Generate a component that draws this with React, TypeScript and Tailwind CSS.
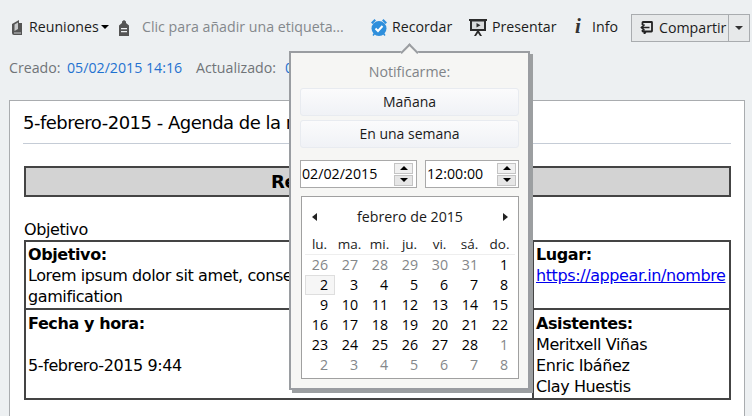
import React from 'react';

const ui = "font-['Open_Sans','Noto_Sans',sans-serif]";

const Spinner = () => (
  <div className="flex h-[23px] w-[19px] flex-col gap-px">
    <div className="flex h-[11px] items-center justify-center border border-[#c4c4c4] bg-[#f0f0f0]">
      <div className="h-0 w-0 border-x-[4px] border-b-[4px] border-x-transparent border-b-black" />
    </div>
    <div className="flex h-[11px] items-center justify-center border border-[#c4c4c4] bg-[#e6e6e6]">
      <div className="h-0 w-0 border-x-[4px] border-t-[4px] border-x-transparent border-t-black" />
    </div>
  </div>
);

const weekDays = ['lu.', 'ma.', 'mi.', 'ju.', 'vi.', 'sá.', 'do.'];
const days: [number, boolean][] = [
  [26, true], [27, true], [28, true], [29, true], [30, true], [31, true], [1, false],
  ...Array.from({ length: 27 }, (_, i): [number, boolean] => [i + 2, false]),
  [1, true], [2, true], [3, true], [4, true], [5, true], [6, true], [7, true], [8, true],
];

const Popover = () => (
  <div className={`${ui} absolute left-[289px] top-[51px] h-[339px] w-[241px] border-2 border-[#9a9da1] bg-[#f6f6f4] px-[9px] shadow-[3px_3px_0_#9c9fa1]`}>
    <div className="absolute -top-[7px] left-[112px] h-[13px] w-[13px] rotate-45 border-l-2 border-t-2 border-[#9a9da1] bg-[#f6f6f4]" />
    <div className="relative mt-[9px] h-[20px] text-center text-[14.2px] leading-[20px] text-[#808488]">Notificarme:</div>
    <button className="mt-[6px] block h-[28px] w-[219px] rounded-[3px] border border-[#e8ebf0] bg-gradient-to-b from-[#fbfbfc] to-[#f0f2f6] pb-[2px] text-[14px] text-[#1a1a1a]">Mañana</button>
    <button className="mt-[4px] block h-[28px] w-[219px] rounded-[3px] border border-[#e8ebf0] bg-gradient-to-b from-[#fbfbfc] to-[#f0f2f6] pb-[2px] text-[14px] text-[#1a1a1a]">En una semana</button>
    <div className="mt-[12px] flex w-[219px] justify-between">
      <div className="flex h-[28px] w-[117px] items-center justify-between border border-[#a9a9a9] bg-white pl-[1px] pr-[3px] text-[14.2px] text-black">
        <span>02/02/2015</span><Spinner />
      </div>
      <div className="flex h-[28px] w-[94px] items-center justify-between border border-[#a9a9a9] bg-white pl-[1px] pr-[2px] text-[14.2px] text-black">
        <span>12:00:00</span><Spinner />
      </div>
    </div>
    <div className="ml-[1px] mt-[8px] h-[183px] w-[218px] border border-[#a0a0a0] bg-white px-[3px]">
      <div className="flex h-[40px] items-center justify-between px-[7px] text-[14.2px] text-[#1a1a1a]">
        <div className="h-0 w-0 border-y-[4.5px] border-r-[5px] border-y-transparent border-r-[#222]" />
        <span>febrero de 2015</span>
        <div className="h-0 w-0 border-y-[4.5px] border-l-[5px] border-y-transparent border-l-[#222]" />
      </div>
      <div className="grid h-[18px] grid-cols-[repeat(7,30px)] border-b border-[#eeeeee] text-[13.5px] leading-[15px] text-[#222]">
        {weekDays.map((d) => <span key={d} className="pr-[1px] text-center">{d}</span>)}
      </div>
      <div className="grid grid-cols-[repeat(7,30px)] text-[14.2px] leading-[20px]">
        {days.map(([n, muted], i) => (
          <span
            key={i}
            className={`h-[20px] text-right ${muted ? 'text-[#84878a]' : 'text-black'} ${i === 7 ? 'border border-[#dedede] bg-[#f6f6f6] pr-[6px] leading-[18px]' : 'pr-[7px]'}`}
          >
            {n}
          </span>
        ))}
      </div>
    </div>
  </div>
);

const Doc = () => (
  <div className="ml-[9px] mr-[7px] h-[316px] overflow-hidden border border-b-0 border-[#a9acaf] bg-white px-[13px] font-['DejaVu_Sans',sans-serif] text-[16px] tracking-[-0.4px] text-black">
    <div className="h-[43px] border-b border-[#c5ccd6] pt-[10px] text-[18px] leading-[24px] tracking-[-0.5px]">5-febrero-2015 - Agenda de la reunión</div>
    <div className="ml-[1px] mt-[22px] flex h-[31px] w-[707px] items-center justify-center border-2 border-[#444] bg-[#d3d3d3] text-[18px] font-bold">Reunión de proyectos</div>
    <div className="ml-[1px] mt-[23px] h-[20px] leading-[20px]">Objetivo</div>
    <div className="ml-[1px] grid h-[160px] w-[707px] grid-cols-[508px_1fr] grid-rows-[68px_1fr] border-2 border-[#444] leading-[21px]">
      <div className="border-b-2 border-r-2 border-[#444] pl-[2px] pt-[2px]">
        <b>Objetivo:</b><br />Lorem ipsum dolor sit amet, consectetur<br />gamification
      </div>
      <div className="border-b-2 border-[#444] pl-[2px] pt-[2px]">
        <b>Lugar:</b><br /><a href="#" className="text-[#0000ee] underline">https://appear.in/nombre</a>
      </div>
      <div className="border-r-2 border-[#444] pl-[2px] pt-[3px]">
        <b>Fecha y hora:</b><br /><br />5-febrero-2015 9:44
      </div>
      <div className="pl-[2px] pt-[3px]">
        <b>Asistentes:</b><br />Meritxell Viñas<br />Enric Ibáñez<br />Clay Huestis
      </div>
    </div>
  </div>
);

export default function App() {
  return (
    <div className="relative h-[416px] w-[752px] overflow-hidden bg-[#edf0f2]">
      <div className={`${ui} flex h-[68px] flex-col whitespace-nowrap text-[14.2px]`}>
        <div className="mt-[13px] flex h-[28px] items-center text-[#1c1c1c]">
          <svg className="ml-[12px] mt-[1px] h-[15px] w-[10px]" viewBox="0 0 10 15" fill="#555">
            <path d="M0 4 7 0v3h3v12H2a2 2 0 0 1-2-2z" />
            <path d="M2 12.500h7v1H2zM2.500 4.500 6 2.500V9l-3.500 2z" fill="#edf0f2" opacity=".75" />
          </svg>
          <span className="ml-[7px] w-[68px]">Reuniones</span>
          <div className="ml-[4px] h-0 w-0 border-x-[4px] border-t-[4px] border-x-transparent border-t-black" />
          <svg className="ml-[10px] mt-[1px] h-[16px] w-[10px]" viewBox="0 0 10 16" fill="#555">
            <path d="M3 1.500 5 0l2 1.500V3l3 2.500V16H0V5.500l3-2.500z" />
            <path d="M2 8h6v1.300H2zM2 11h6v1.300H2z" fill="#edf0f2" />
          </svg>
          <span className="ml-[13px] w-[229px] text-[#84888c]">Clic para añadir una etiqueta...</span>
          <svg className="h-[17px] w-[16px]" viewBox="0 0 16 17">
            <circle cx="8" cy="9.500" r="7.500" fill="#2f8fdc" />
            <path d="M0 3.500 3.500 0 5 1.500 1.500 5zM16 3.500 12.500 0 11 1.500 14.500 5z" fill="#2f8fdc" />
            <path d="m2 16.500 2-2.500M14 16.500 12 14" stroke="#2f8fdc" strokeWidth="1.500" />
            <path d="m4.500 9.500 2.500 2.500 4.500-5" stroke="#fff" strokeWidth="2" fill="none" />
          </svg>
          <span className="ml-[5px] w-[60px]">Recordar</span>
          <svg className="ml-[17px] h-[17px] w-[18px]" viewBox="0 0 18 17">
            <path d="M0 0h18v2h-1v10H1V2H0z" fill="#2c2c2c" />
            <path d="M3 2.500h12v7.500H3z" fill="#d9dbdc" />
            <path d="m7.500 4 4 2.200-4 2.200z" fill="#2c2c2c" />
            <path d="m8 12-3 5h2l2-3 2 3h2l-3-5z" fill="#2c2c2c" />
          </svg>
          <span className="ml-[5px] w-[61px]">Presentar</span>
          <span className="ml-[22px] w-[9px] font-['Liberation_Serif',serif] text-[21px] font-bold italic text-[#333]">i</span>
          <span className="ml-[8px] w-[26px]">Info</span>
          <div className="ml-[13px] mt-[1px] flex h-[28px] w-[119px] items-center border border-[#a9acaf] bg-[#e7e9ea]">
            <svg className="ml-[8px] h-[13px] w-[13px]" viewBox="0 0 13 13" fill="none" stroke="#222">
              <path d="M2.500 4V1.500a.5.5 0 0 1 .5-.5h8.500a.5.5 0 0 1 .5.5V10a.5.5 0 0 1-.5.5H6L4.500 12.500V10.500H3a.5.5 0 0 1-.5-.5V9" strokeWidth="1.800" />
              <path d="M9.500 6.500H1.500M4.500 3.500l-3 3 3 3" strokeWidth="1.700" />
            </svg>
            <span className="ml-[6px] w-[69px]">Compartir</span>
            <div className="flex h-full flex-1 items-center justify-center border-l border-[#a9acaf]">
              <div className="h-0 w-0 border-x-[4px] border-t-[4px] border-x-transparent border-t-[#333]" />
            </div>
          </div>
        </div>
        <div className="mt-[17px] flex h-[20px] items-center text-[#707478]">
          <span className="ml-[9px] w-[51px]">Creado:</span>
          <span className="ml-[7px] w-[115px] text-[#1f72d0]">05/02/2015 14:16</span>
          <span className="ml-[14px] w-[82px]">Actualizado:</span>
          <span className="ml-[7px] text-[#1f72d0]">05/02/2015</span>
        </div>
      </div>
      <div className="h-[32px]" />
      <Doc />
      <Popover />
    </div>
  );
}
